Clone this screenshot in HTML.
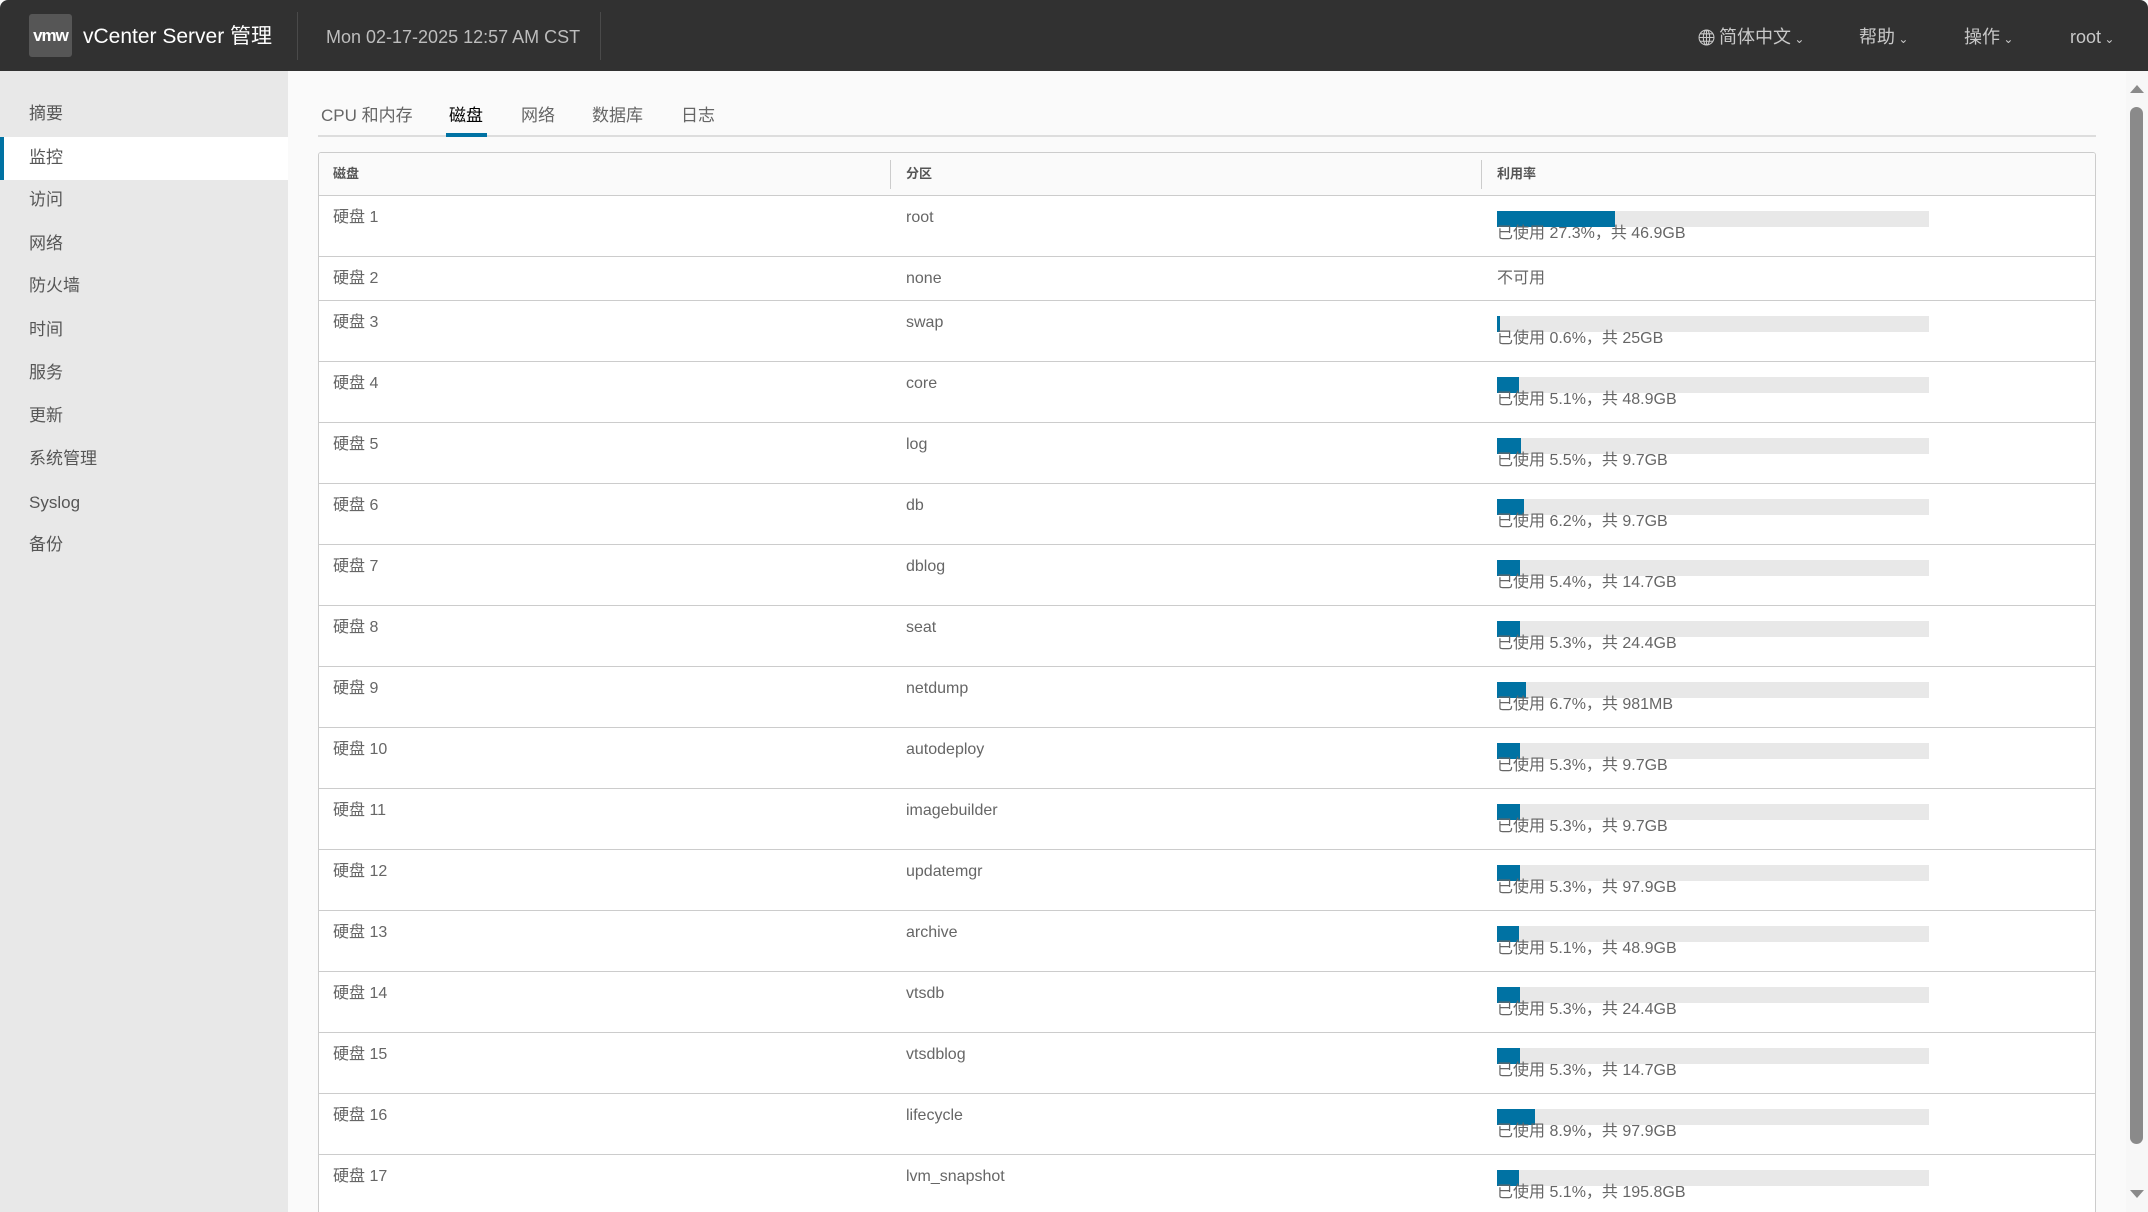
<!DOCTYPE html>
<html style="width:2148px;height:1212px;overflow:hidden"><head><meta charset="utf-8"><style>
*{margin:0;padding:0;box-sizing:border-box}
body{width:2148px;height:1212px;overflow:hidden;background:#fafafa;font-family:"Liberation Sans","Noto Sans CJK SC",sans-serif;color:#565656;position:relative}
.hdr{position:absolute;left:0;top:0;width:2148px;height:71px;background:#313131;border-radius:8px 8px 0 0}
.logo{position:absolute;left:29px;top:14px;width:43px;height:43px;background:#565656;border-radius:3px;color:#fff;font-weight:bold;font-size:17px;letter-spacing:-1px;line-height:43px;text-align:center}
.abs{position:absolute;white-space:nowrap;line-height:24px}
.sep{position:absolute;top:12px;width:1px;height:48px;background:#4a4a4a}
.nav{color:#c8c8c8;font-size:18px;top:25px}
.side{position:absolute;left:0;top:71px;width:288px;height:1141px;background:#e8e8e8}
.si{position:absolute;left:29px;font-size:17px;color:#565656;line-height:22px}
.act{position:absolute;left:0;top:137px;width:288px;height:43px;background:#fff;border-left:4px solid #0072a3}
.tab{position:absolute;top:105px;font-size:17px;color:#666;line-height:22px}
.wrap{position:absolute;left:0;top:0;width:2148px;height:1212px;overflow:hidden}
.tbl{position:absolute;left:318px;top:152px;width:1778px;height:1100px;border:1px solid #ccc;border-radius:3px;background:#fff;overflow:hidden}
.th{position:absolute;left:0;top:0;width:100%;height:43px;background:#fafafa;border-bottom:1px solid #ccc}
.hc{position:absolute;top:12px;font-size:13px;font-weight:bold;color:#555;line-height:18px}
.vs{position:absolute;top:7px;width:1px;height:29px;background:#ccc}
.row{position:absolute;left:0;width:100%;border-bottom:1px solid #ccc}
.c{position:absolute;top:11px;font-size:16px;color:#666;white-space:nowrap;line-height:22px}
.bar{position:absolute;left:1178px;top:15px;width:432px;height:16px;background:#e8e8e8}
.bar i{display:block;height:16px;background:#0072a3}
.bt{position:absolute;left:1178px;top:27px;font-size:16px;color:#666;white-space:nowrap;line-height:22px}
</style></head><body>
<div class="wrap">
<div class="hdr">
<div class="logo">vmw</div>
<div class="abs" style="left:83px;top:25px;font-size:21px;color:#fff">vCenter Server 管理</div>
<div class="sep" style="left:297px"></div>
<div class="abs" style="left:326px;top:25px;font-size:18px;color:#bdbdbd">Mon 02-17-2025 12:57 AM CST</div>
<div class="sep" style="left:600px"></div>
<svg class="abs" style="left:1698px;top:29px" width="17" height="17" viewBox="0 0 16 16" fill="none" stroke="#c8c8c8" stroke-width="1"><circle cx="8" cy="8" r="7"/><ellipse cx="8" cy="8" rx="3" ry="7"/><path d="M1 8h14M2 4.5h12M2 11.5h12M8 1v14"/></svg>
<div class="abs nav" style="left:1719px">简体中文<span style="font-size:12px"> ⌄</span></div>
<div class="abs nav" style="left:1859px">帮助<span style="font-size:12px"> ⌄</span></div>
<div class="abs nav" style="left:1964px">操作<span style="font-size:12px"> ⌄</span></div>
<div class="abs nav" style="left:2070px">root<span style="font-size:12px"> ⌄</span></div>
</div>
<div class="side">
<div class="act" style="top:66px"></div>
<div class="si" style="top:32px">摘要</div>
<div class="si" style="top:76px">监控</div>
<div class="si" style="top:118px">访问</div>
<div class="si" style="top:162px">网络</div>
<div class="si" style="top:204px">防火墙</div>
<div class="si" style="top:248px">时间</div>
<div class="si" style="top:291px">服务</div>
<div class="si" style="top:334px">更新</div>
<div class="si" style="top:377px">系统管理</div>
<div class="si" style="top:421px">Syslog</div>
<div class="si" style="top:463px">备份</div>
</div>
<div class="tab" style="left:321px">CPU 和内存</div>
<div class="tab" style="left:449px;color:#000">磁盘</div>
<div class="tab" style="left:521px">网络</div>
<div class="tab" style="left:592px">数据库</div>
<div class="tab" style="left:681px">日志</div>
<div class="abs" style="left:318px;top:135px;width:1778px;height:2px;background:#ddd"></div>
<div class="abs" style="left:446px;top:133px;width:41px;height:4px;background:#0072a3"></div>
<div class="tbl">
<div class="th">
<div class="hc" style="left:14px">磁盘</div>
<div class="vs" style="left:571px"></div><div class="hc" style="left:587px">分区</div>
<div class="vs" style="left:1162px"></div><div class="hc" style="left:1178px">利用率</div>
</div>
<div class="row" style="top:43px;height:61px"><div class="c" style="left:14px">硬盘 1</div><div class="c" style="left:587px">root</div><div class="bar"><i style="width:118px"></i></div><div class="bt">已使用 27.3%，共 46.9GB</div></div>
<div class="row" style="top:104px;height:44px"><div class="c" style="left:14px">硬盘 2</div><div class="c" style="left:587px">none</div><div class="c" style="left:1178px">不可用</div></div>
<div class="row" style="top:148px;height:61px"><div class="c" style="left:14px">硬盘 3</div><div class="c" style="left:587px">swap</div><div class="bar"><i style="width:3px"></i></div><div class="bt">已使用 0.6%，共 25GB</div></div>
<div class="row" style="top:209px;height:61px"><div class="c" style="left:14px">硬盘 4</div><div class="c" style="left:587px">core</div><div class="bar"><i style="width:22px"></i></div><div class="bt">已使用 5.1%，共 48.9GB</div></div>
<div class="row" style="top:270px;height:61px"><div class="c" style="left:14px">硬盘 5</div><div class="c" style="left:587px">log</div><div class="bar"><i style="width:24px"></i></div><div class="bt">已使用 5.5%，共 9.7GB</div></div>
<div class="row" style="top:331px;height:61px"><div class="c" style="left:14px">硬盘 6</div><div class="c" style="left:587px">db</div><div class="bar"><i style="width:27px"></i></div><div class="bt">已使用 6.2%，共 9.7GB</div></div>
<div class="row" style="top:392px;height:61px"><div class="c" style="left:14px">硬盘 7</div><div class="c" style="left:587px">dblog</div><div class="bar"><i style="width:23px"></i></div><div class="bt">已使用 5.4%，共 14.7GB</div></div>
<div class="row" style="top:453px;height:61px"><div class="c" style="left:14px">硬盘 8</div><div class="c" style="left:587px">seat</div><div class="bar"><i style="width:23px"></i></div><div class="bt">已使用 5.3%，共 24.4GB</div></div>
<div class="row" style="top:514px;height:61px"><div class="c" style="left:14px">硬盘 9</div><div class="c" style="left:587px">netdump</div><div class="bar"><i style="width:29px"></i></div><div class="bt">已使用 6.7%，共 981MB</div></div>
<div class="row" style="top:575px;height:61px"><div class="c" style="left:14px">硬盘 10</div><div class="c" style="left:587px">autodeploy</div><div class="bar"><i style="width:23px"></i></div><div class="bt">已使用 5.3%，共 9.7GB</div></div>
<div class="row" style="top:636px;height:61px"><div class="c" style="left:14px">硬盘 11</div><div class="c" style="left:587px">imagebuilder</div><div class="bar"><i style="width:23px"></i></div><div class="bt">已使用 5.3%，共 9.7GB</div></div>
<div class="row" style="top:697px;height:61px"><div class="c" style="left:14px">硬盘 12</div><div class="c" style="left:587px">updatemgr</div><div class="bar"><i style="width:23px"></i></div><div class="bt">已使用 5.3%，共 97.9GB</div></div>
<div class="row" style="top:758px;height:61px"><div class="c" style="left:14px">硬盘 13</div><div class="c" style="left:587px">archive</div><div class="bar"><i style="width:22px"></i></div><div class="bt">已使用 5.1%，共 48.9GB</div></div>
<div class="row" style="top:819px;height:61px"><div class="c" style="left:14px">硬盘 14</div><div class="c" style="left:587px">vtsdb</div><div class="bar"><i style="width:23px"></i></div><div class="bt">已使用 5.3%，共 24.4GB</div></div>
<div class="row" style="top:880px;height:61px"><div class="c" style="left:14px">硬盘 15</div><div class="c" style="left:587px">vtsdblog</div><div class="bar"><i style="width:23px"></i></div><div class="bt">已使用 5.3%，共 14.7GB</div></div>
<div class="row" style="top:941px;height:61px"><div class="c" style="left:14px">硬盘 16</div><div class="c" style="left:587px">lifecycle</div><div class="bar"><i style="width:38px"></i></div><div class="bt">已使用 8.9%，共 97.9GB</div></div>
<div class="row" style="top:1002px;height:61px"><div class="c" style="left:14px">硬盘 17</div><div class="c" style="left:587px">lvm_snapshot</div><div class="bar"><i style="width:22px"></i></div><div class="bt">已使用 5.1%，共 195.8GB</div></div>
</div>
<div class="abs" style="left:2126px;top:71px;width:22px;height:1141px;background:#f7f7f7"></div>
<div class="abs" style="left:2130px;top:85px;width:0;height:0;border-left:7px solid transparent;border-right:7px solid transparent;border-bottom:8px solid #8a8a8a"></div>
<div class="abs" style="left:2130px;top:107px;width:13px;height:1037px;background:#8a8a8a;border-radius:7px"></div>
<div class="abs" style="left:2130px;top:1190px;width:0;height:0;border-left:7px solid transparent;border-right:7px solid transparent;border-top:8px solid #8a8a8a"></div>
</div>
</body></html>
